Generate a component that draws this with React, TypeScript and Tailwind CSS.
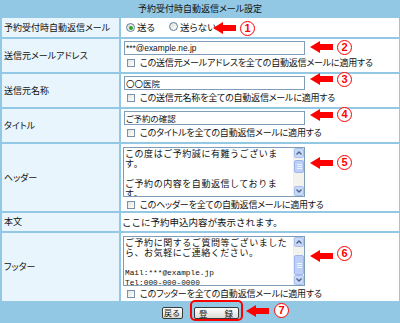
import React from "react";

const FRAME = "bg-[#93c8e4]";
const LBL = "bg-[#e8f5fc] flex items-center pl-[2px] text-[9px] [font-feature-settings:'palt'] text-[#111]";
const VAL = "bg-white";

function Checkbox() {
  return <span className="inline-block w-[8px] h-[8px] border border-[#7790ab] bg-gradient-to-br from-[#e4e4de] to-white shrink-0" />;
}

function Radio({ on }: { on?: boolean }) {
  return (
    <span className="inline-flex w-[9px] h-[9px] rounded-full border border-[#5f7f9f] bg-gradient-to-br from-[#dcdcd6] to-white items-center justify-center shrink-0">
      {on && <span className="w-[4px] h-[4px] rounded-full bg-[#2aa52a]" />}
    </span>
  );
}

function CheckLine({ text }: { text: string }) {
  return (
    <div className="flex items-center h-[11px] pl-[6px] gap-[5px] text-[9px] tracking-[-0.2px] [font-feature-settings:'palt'] text-[#111] whitespace-nowrap">
      <Checkbox />
      <span>{text}</span>
    </div>
  );
}

function TextInput({ value, latin }: { value: string; latin?: boolean }) {
  return (
    <div className="ml-[3px] w-[181px] h-[14px] border border-[#7f9db9] bg-white flex items-center pl-[1px] overflow-hidden">
      <span
        className={
          (latin ? "font-['Liberation_Sans',sans-serif] text-[8.4px]" : "text-[8.5px] [font-feature-settings:'palt']") +
          " leading-none text-[#111] whitespace-nowrap"
        }
      >
        {value}
      </span>
    </div>
  );
}

function Scrollbar({ thumbTop, thumbH }: { thumbTop: number; thumbH: number }) {
  return (
    <div className="w-[11px] h-full flex flex-col bg-[#f3f2ec] border-l border-[#eeeeea]">
      <div className="h-[10px] bg-[#c8d8f8] border border-[#a8bff0] rounded-[2px] flex items-center justify-center">
        <svg width="6" height="4" viewBox="0 0 6 4"><path d="M0.5 3.5 L3 1 L5.5 3.5" stroke="#4d6185" strokeWidth="1.3" fill="none" /></svg>
      </div>
      <div className="flex-1 relative">
        <div
          className="absolute left-0 right-0 bg-[#bcd0f7] border border-[#9fb7ee] rounded-[2px] flex flex-col items-center justify-center gap-[1px]"
          style={{ top: thumbTop, height: thumbH }}
        >
          <span className="w-[5px] h-[1px] bg-[#eef3fe]" />
          <span className="w-[5px] h-[1px] bg-[#eef3fe]" />
          <span className="w-[5px] h-[1px] bg-[#eef3fe]" />
        </div>
      </div>
      <div className="h-[10px] bg-[#c8d8f8] border border-[#a8bff0] rounded-[2px] flex items-center justify-center">
        <svg width="6" height="4" viewBox="0 0 6 4"><path d="M0.5 0.5 L3 3 L5.5 0.5" stroke="#4d6185" strokeWidth="1.3" fill="none" /></svg>
      </div>
    </div>
  );
}

function FakeTextarea({ children, thumbTop, thumbH }: { children: React.ReactNode; thumbTop: number; thumbH: number }) {
  return (
    <div className="ml-[2px] w-[182px] h-[50px] border border-[#7f9db9] bg-white flex overflow-hidden">
      <div className="flex-1 pl-[1px] pt-[1px] text-[9px] tracking-[0.55px] leading-[10px] text-[#111] overflow-hidden">{children}</div>
      <Scrollbar thumbTop={thumbTop} thumbH={thumbH} />
    </div>
  );
}

function Arrow({ x, y }: { x: number; y: number }) {
  return (
    <svg className="absolute" style={{ left: x, top: y }} width="23" height="12" viewBox="0 0 23 12">
      <polygon points="0,6 10,0 10,3 23,3 23,9 10,9 10,12" fill="#ff0000" />
    </svg>
  );
}

function Num({ x, y, n }: { x: number; y: number; n: string }) {
  return (
    <span
      className="absolute w-[15px] h-[15px] rounded-full border-[1.5px] border-[#ff0000] bg-white text-[#ff0000] font-bold text-[11px] leading-none flex items-center justify-center font-['Liberation_Sans',sans-serif]"
      style={{ left: x, top: y }}
    >
      {n}
    </span>
  );
}

export default function App() {
  return (
    <div className={"relative w-[400px] h-[323px] overflow-hidden font-['Noto_Sans_CJK_JP',sans-serif] " + FRAME}>
      <div className="h-[17px] flex items-center justify-center text-[9px] [font-feature-settings:'palt'] text-[#111]">
        予約受付時自動返信メール設定
      </div>
      <div className="flex flex-col gap-[2px] pl-[2px] pr-[1px] pt-[1px]">
        {/* row 1 */}
        <div className="grid grid-cols-[117px_1fr] gap-x-[2px] h-[19px]">
          <div className={LBL}>予約受付時自動返信メール</div>
          <div className={VAL + " flex items-center pl-[5px] text-[9.5px] [font-feature-settings:'palt'] text-[#111]"}>
            <Radio on />
            <span className="ml-[2px]">送る</span>
            <span className="ml-[14px]"><Radio /></span>
            <span className="ml-[2px]">送らない</span>
          </div>
        </div>
        {/* row 2 */}
        <div className="grid grid-cols-[117px_1fr] gap-x-[2px] h-[33px]">
          <div className={LBL}>送信元メールアドレス</div>
          <div className={VAL + " flex flex-col pt-[2px] gap-[2px]"}>
            <TextInput value="***@example.ne.jp" latin />
            <CheckLine text="この送信元メールアドレスを全ての自動返信メールに適用する" />
          </div>
        </div>
        {/* row 3 */}
        <div className="grid grid-cols-[117px_1fr] gap-x-[2px] h-[33px]">
          <div className={LBL}>送信元名称</div>
          <div className={VAL + " flex flex-col pt-[2px] gap-[2px]"}>
            <TextInput value="〇〇医院" />
            <CheckLine text="この送信元名称を全ての自動返信メールに適用する" />
          </div>
        </div>
        {/* row 4 */}
        <div className="grid grid-cols-[117px_1fr] gap-x-[2px] h-[33px]">
          <div className={LBL}>タイトル</div>
          <div className={VAL + " flex flex-col pt-[2px] gap-[2px]"}>
            <TextInput value="ご予約の確認" />
            <CheckLine text="このタイトルを全ての自動返信メールに適用する" />
          </div>
        </div>
        {/* row 5 */}
        <div className="grid grid-cols-[117px_1fr] gap-x-[2px] h-[67px]">
          <div className={LBL}>ヘッダー</div>
          <div className={VAL + " flex flex-col pt-[3px] gap-[2px]"}>
            <FakeTextarea thumbTop={2} thumbH={13}>
              <div className="whitespace-nowrap">この度はご予約誠に有難うございま</div>
              <div className="whitespace-nowrap">す。</div>
              <div className="h-[10px]" />
              <div className="whitespace-nowrap">ご予約の内容を自動返信しておりま</div>
              <div className="whitespace-nowrap">す。</div>
            </FakeTextarea>
            <CheckLine text="このヘッダーを全ての自動返信メールに適用する" />
          </div>
        </div>
        {/* row 6 */}
        <div className="grid grid-cols-[117px_1fr] gap-x-[2px] h-[18px]">
          <div className={LBL}>本文</div>
          <div className={VAL + " flex items-center pl-[1px] text-[9.5px] text-[#111] whitespace-nowrap"}>
            ここに予約申込内容が表示されます。
          </div>
        </div>
        {/* row 7 */}
        <div className="grid grid-cols-[117px_1fr] gap-x-[2px] h-[68px]">
          <div className={LBL}>フッター</div>
          <div className={VAL + " flex flex-col pt-[3px] gap-[2px]"}>
            <FakeTextarea thumbTop={8} thumbH={20}>
              <div className="whitespace-nowrap">ご予約に関するご質問等ございました</div>
              <div className="whitespace-nowrap">ら、お気軽にご連絡ください。</div>
              <div className="h-[10px]" />
              <div className="whitespace-nowrap font-['Liberation_Mono',monospace] text-[7.8px] tracking-normal">Mail:***@example.jp</div>
              <div className="whitespace-nowrap font-['Liberation_Mono',monospace] text-[7.8px] tracking-normal">Tel:000-000-0000</div>
            </FakeTextarea>
            <CheckLine text="このフッターを全ての自動返信メールに適用する" />
          </div>
        </div>
      </div>
      {/* buttons */}
      <div className="h-[24px] flex items-center justify-center gap-[11px]">
        <button className="w-[21px] h-[12px] border border-[#3a3a3a] rounded-[2px] bg-gradient-to-b from-white to-[#dcdcd6] text-[8px] leading-none text-[#111] flex items-center justify-center">
          戻る
        </button>
        <button className="w-[45px] h-[12px] border border-[#3a3a3a] rounded-[2px] bg-gradient-to-b from-white to-[#dcdcd6] text-[8.5px] leading-none text-[#111] flex items-center justify-center">
          登　　録
        </button>
      </div>

      {/* annotations */}
      <span className="absolute left-[190px] top-[300px] w-[53px] h-[21px] border-2 border-[#ff0000] rounded-[5px]" />
      <Arrow x={213} y={22} />
      <Num x={240} y={21} n="1" />
      <Arrow x={310} y={41} />
      <Num x={337} y={40} n="2" />
      <Arrow x={310} y={73} />
      <Num x={337} y={72} n="3" />
      <Arrow x={310} y={109} />
      <Num x={337} y={107} n="4" />
      <Arrow x={310} y={157} />
      <Num x={337} y={155} n="5" />
      <Arrow x={310} y={250} />
      <Num x={337} y={246} n="6" />
      <Arrow x={246} y={305} />
      <Num x={274} y={303} n="7" />
    </div>
  );
}
